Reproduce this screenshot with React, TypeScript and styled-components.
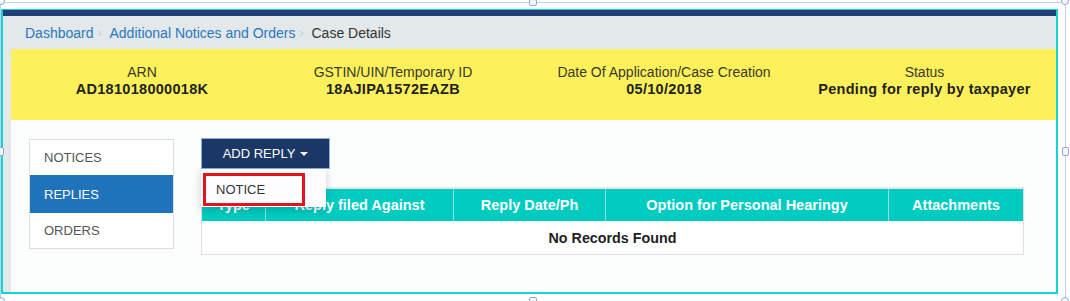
import { createGlobalStyle, styled } from "styled-components"

const GlobalStyle = createGlobalStyle`
  html, body {
    margin: 0;
    padding: 0;
    background: #ffffff;
  }
  body {
    font-family: "Liberation Sans", Arial, sans-serif;
    font-size: 14px;
    color: #333;
  }
`

const Canvas = styled.div`
  position: relative;
  width: 1070px;
  height: 301px;
  padding: 9px 0 0 1px;
  box-sizing: border-box;
  overflow: hidden;
`

/* image selection frame drawn over the screenshot */
const SelectLine = styled.div<{ $side: "top" | "right" | "left" }>`
  position: absolute;
  background: #bcd2f0;
  ${(p) =>
    p.$side === "top"
      ? "top: 2px; left: 0; width: 1066px; height: 1px;"
      : p.$side === "right"
      ? "top: 2px; left: 1065px; width: 1px; height: 299px;"
      : "top: 2px; left: 0; width: 1px; height: 299px;"}
`

const Handle = styled.div<{ $x: number; $y: number; $w: number; $h: number; $round?: boolean }>`
  position: absolute;
  left: ${(p) => p.$x}px;
  top: ${(p) => p.$y}px;
  width: ${(p) => p.$w}px;
  height: ${(p) => p.$h}px;
  box-sizing: border-box;
  background: #f4f7fc;
  border: 1px solid #8fa9d4;
  border-radius: ${(p) => (p.$round ? "50%" : "2px")};
`

const Frame = styled.div`
  width: 1057px;
  height: 285px;
  box-sizing: border-box;
  border: 2px solid #17d4cf;
  border-top: 1px solid #17d4cf;
  background: #e3e9ea;
  display: flex;
  flex-direction: column;
`

const NavBar = styled.div`
  height: 6px;
  background: #213f78;
  flex-shrink: 0;
`

const Inner = styled.div`
  flex: 1;
  display: flex;
  flex-direction: column;
  margin-left: 8px;
`

const Breadcrumb = styled.div`
  height: 33px;
  display: flex;
  align-items: center;
  padding-left: 14px;
  font-size: 14px;
  color: #333;
`

const Crumb = styled.span<{ $link?: boolean }>`
  color: ${(p) => (p.$link ? "#2a77c0" : "#333")};
`

const Sep = styled.span`
  color: #c5c9cc;
  font-size: 12px;
  margin: 0 8px 0 4px;
`

const InfoBand = styled.div`
  height: 71px;
  background: #fcf15b;
  display: grid;
  grid-template-columns: 262px 240px 302px 1fr;
  padding: 15px 22px 0 0;
  box-sizing: border-box;
`

const InfoCell = styled.div`
  text-align: center;
  line-height: 17px;
  white-space: nowrap;
`

const InfoLabel = styled.div`
  font-size: 14px;
  color: #3a3a2a;
`

const InfoValue = styled.div`
  font-size: 14.5px;
  font-weight: bold;
  color: #222;
  letter-spacing: 0.3px;
`

const Content = styled.div`
  flex: 1;
  background: #fbfdfd;
  display: flex;
  gap: 27px;
  padding: 19px 33px 0 18px;
`

const SideNav = styled.div`
  width: 145px;
  flex-shrink: 0;
  box-sizing: border-box;
  align-self: flex-start;
  border: 1px solid #dcdfe0;
  background: #fff;
  display: flex;
  flex-direction: column;
`

const SideItem = styled.div<{ $active?: boolean; $h: number }>`
  height: ${(p) => p.$h}px;
  display: flex;
  align-items: center;
  padding-left: 14px;
  font-size: 13px;
  background: ${(p) => (p.$active ? "#1f73ba" : "transparent")};
  color: ${(p) => (p.$active ? "#fff" : "#555")};
`

const Main = styled.div`
  flex: 1;
  position: relative;
`

const AddButton = styled.div`
  width: 129px;
  height: 31px;
  box-sizing: border-box;
  background: #1b3766;
  border: 1px solid #8eaee6;
  color: #fff;
  font-size: 13px;
  display: flex;
  align-items: center;
  justify-content: center;
  gap: 5px;
  margin-top: -1px;
`

const Caret = styled.span`
  width: 0;
  height: 0;
  border-left: 4px solid transparent;
  border-right: 4px solid transparent;
  border-top: 4px solid #fff;
  margin-top: 1px;
`

const Menu = styled.div`
  position: absolute;
  left: 0;
  top: 30px;
  width: 125px;
  height: 38px;
  background: #fdfdff;
  box-shadow: 0 3px 8px rgba(0, 0, 0, 0.18);
  padding: 4px 0 0 2px;
  box-sizing: border-box;
  z-index: 2;
`

const MenuItem = styled.div`
  width: 102px;
  height: 33px;
  box-sizing: border-box;
  border: 3px solid #e8121c;
  display: flex;
  align-items: center;
  padding-left: 10px;
  font-size: 13px;
  color: #333;
`

const Table = styled.div`
  margin-top: 18px;
  width: 821px;
  border: 1px solid #dcdfe0;
  border-top: none;
`

const HeadRow = styled.div`
  display: grid;
  grid-template-columns: 63px 188px 152px 283px 1fr;
  height: 34px;
  background: #00cbc1;
  border-top: 2px solid #e4e7e7;
  box-sizing: border-box;
`

const HeadCell = styled.div`
  display: flex;
  align-items: center;
  justify-content: center;
  color: #fff;
  font-weight: bold;
  font-size: 14.5px;
  white-space: nowrap;
  border-left: 1px solid #8ee2dc;
  &:first-child {
    border-left: none;
  }
`

const EmptyRow = styled.div`
  height: 33px;
  display: flex;
  align-items: center;
  justify-content: center;
  font-weight: bold;
  font-size: 14.3px;
  color: #222;
  background: #fff;
`

const info = [
  { label: "ARN", value: "AD181018000018K" },
  { label: "GSTIN/UIN/Temporary ID", value: "18AJIPA1572EAZB" },
  { label: "Date Of Application/Case Creation", value: "05/10/2018" },
  { label: "Status", value: "Pending for reply by taxpayer" },
]

const columns = [
  "Type",
  "Reply filed Against",
  "Reply Date/Ph",
  "Option for Personal Hearingy",
  "Attachments",
]

export default function App() {
  return (
    <>
      <GlobalStyle />
      <Canvas>
        <Frame>
          <NavBar />
          <Inner>
            <Breadcrumb>
              <Crumb $link>Dashboard</Crumb>
              <Sep>›</Sep>
              <Crumb $link>Additional Notices and Orders</Crumb>
              <Sep>›</Sep>
              <Crumb>Case Details</Crumb>
            </Breadcrumb>
            <InfoBand>
              {info.map((i) => (
                <InfoCell key={i.label}>
                  <InfoLabel>{i.label}</InfoLabel>
                  <InfoValue>{i.value}</InfoValue>
                </InfoCell>
              ))}
            </InfoBand>
            <Content>
              <SideNav>
                <SideItem $h={35}>NOTICES</SideItem>
                <SideItem $h={38} $active>
                  REPLIES
                </SideItem>
                <SideItem $h={35}>ORDERS</SideItem>
              </SideNav>
              <Main>
                <AddButton>
                  ADD REPLY <Caret />
                </AddButton>
                <Menu>
                  <MenuItem>NOTICE</MenuItem>
                </Menu>
                <Table>
                  <HeadRow>
                    {columns.map((c) => (
                      <HeadCell key={c}>{c}</HeadCell>
                    ))}
                  </HeadRow>
                  <EmptyRow>No Records Found</EmptyRow>
                </Table>
              </Main>
            </Content>
          </Inner>
        </Frame>
        <SelectLine $side="top" />
        <SelectLine $side="left" />
        <SelectLine $side="right" />
        <Handle $x={-3} $y={-3} $w={8} $h={8} $round />
        <Handle $x={1061} $y={-3} $w={8} $h={8} $round />
        <Handle $x={529} $y={-1} $w={8} $h={7} />
        <Handle $x={-3} $y={147} $w={7} $h={9} />
        <Handle $x={1062} $y={147} $w={7} $h={9} />
        <Handle $x={529} $y={297} $w={8} $h={7} />
        <Handle $x={-3} $y={297} $w={8} $h={8} $round />
        <Handle $x={1061} $y={297} $w={8} $h={8} $round />
      </Canvas>
    </>
  )
}
